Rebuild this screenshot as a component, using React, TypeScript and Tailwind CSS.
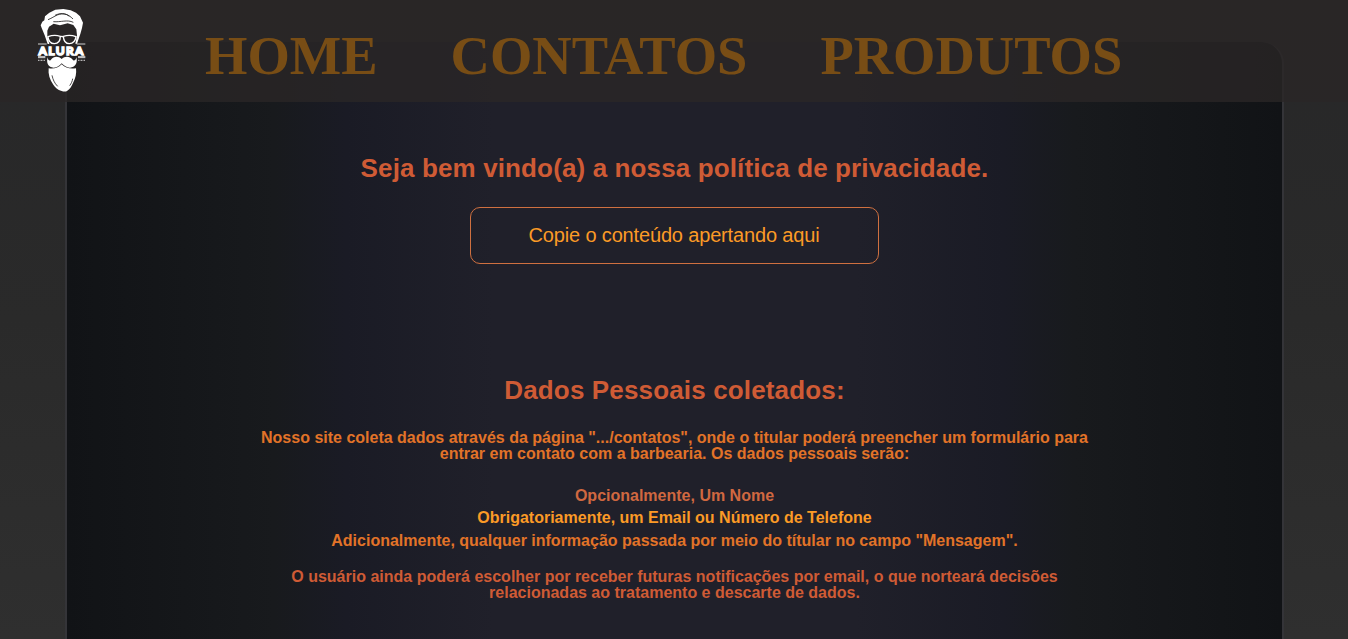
import React from "react";

const navItems = ["HOME", "CONTATOS", "PRODUTOS"];

function Logo() {
  return (
    <svg viewBox="0 0 270 330" className="h-[110px] w-[90px]" fill="#fff" aria-label="Alura">
      <path d="M83 132 74 106 65 84 62 76 67 65 73 61 75 49 88 38 106 29 130 27 152 31 168 38 180 49 189 68 186 84 181 102 171 131 166 131 171 106 169 88 160 75 143 70 120 76 101 71 87 80 82 92 82 108 88 132z" />
      <g fill="none" stroke="#292727" strokeWidth="2.600">
        <path d="M84 59c18-7 28-19 48-17 12 1 20 8 27 15M105 46c17-8 31-7 43 3M100 65c22 2 42-7 60 2" />
      </g>
      <g fill="none" stroke="#fff">
        <path strokeWidth="4" d="M84 110c13-5 26-5 37-1 0 14-5 22-18 22-12 0-18-8-19-21zM130 109c13-4 25-4 38 1-2 14-8 21-20 21-11 0-17-8-18-22zM120 111q5-4 10 0" />
        <path strokeWidth="2.400" d="M54 132h26M170 132h26M54 170h22M174 170h22M54 173h22M174 173h22" />
        <path strokeWidth="4" strokeDasharray="3 1.500" d="M54 181h22M174 181h22" opacity=".65" />
      </g>
      <text x="125" y="164" textAnchor="middle" textLength="139" lengthAdjust="spacingAndGlyphs" stroke="#fff" strokeWidth="4" className="font-['Lato',sans-serif] text-[35px] font-black tracking-[4px]">ALURA</text>
      <path d="M125 177c-10-10-25-8-31 1-3 6-10 5-11-6-5 17 2 31 18 31 11 0 17-6 24-13 8 7 14 13 25 13 15 0 24-14 19-31-2 11-9 12-12 6-7-9-22-11-32-1z" />
      <path d="M86 205c17 2 28-1 39-12 12 11 22 14 43 12 2 15-1 30-9 44-4 10-9 18-17 23-5 4-11 3-17 1-13-4-19-10-25-19-11-15-16-32-14-49z" />
      <path d="M96 226c3 13 7 23 17 33M158 236c-1 8-4 14-9 21" stroke="#292727" strokeWidth="2.500" fill="none" />
    </svg>
  );
}

export default function App() {
  return (
    <div className="relative h-[639px] overflow-hidden bg-linear-to-b from-[#272728] via-[#2a2a2a] via-50% to-[#2f2f2f] pt-[42px] font-['Liberation_Sans',Arial,sans-serif]">
      <header className="absolute inset-x-0 top-0 flex h-[102px] bg-[#2a2727]/78">
        <div className="ml-5 w-[90px]">
          <Logo />
        </div>
        <nav className="ml-[95px] flex gap-[73px] pt-[25px] font-['Liberation_Serif',serif] text-[54.5px] leading-[62px] font-bold text-[#784d15]">
          {navItems.map((item) => (
            <a key={item} href="#">{item}</a>
          ))}
        </nav>
      </header>

      <main className="mx-auto flex h-[620px] w-[1219px] flex-col items-center rounded-t-[22px] border-x-2 border-[#343438] bg-[linear-gradient(to_right,#111316,#181a1d_17%,#1a1b25_23%,#20202a_35%,#20202a_65%,#1a1b25_77%,#181a1d_83%,#111316)] pl-px text-center font-bold">
        <h1 className="mt-[110px] text-[26px] leading-8 tracking-[0.13px] text-[#cf5b35]">Seja bem vindo(a) a nossa política de privacidade.</h1>
        <button className="mt-[23px] -ml-px h-[57px] w-[409px] rounded-[10px] border border-[#cf7040] pb-0.5 text-[20px] font-normal tracking-[-0.16px] text-[#fb9a26]">
          Copie o conteúdo apertando aqui
        </button>
        <h2 className="mt-[110px] text-[26px] leading-8 tracking-[0.15px] text-[#cf5b35]">Dados Pessoais coletados:</h2>
        <p className="mt-6 w-[853px] text-base leading-4 text-[#e27328]">
          Nosso site coleta dados através da página ".../contatos", onde o titular poderá preencher um formulário para entrar em contato com a barbearia. Os dados pessoais serão:
        </p>
        <ul className="mt-[23px] text-base leading-[22.4px]">
          <li className="text-[#d06840]">Opcionalmente, Um Nome</li>
          <li className="text-[#fb9a26]">Obrigatoriamente, um Email ou Número de Telefone</li>
          <li className="text-[#e27328]">Adicionalmente, qualquer informação passada por meio do títular no campo "Mensagem".</li>
        </ul>
        <p className="mt-[17px] w-[853px] text-base leading-4 text-[#cf5b35]">
          O usuário ainda poderá escolher por receber futuras notificações por email, o que norteará decisões relacionadas ao tratamento e descarte de dados.
        </p>
      </main>
    </div>
  );
}
